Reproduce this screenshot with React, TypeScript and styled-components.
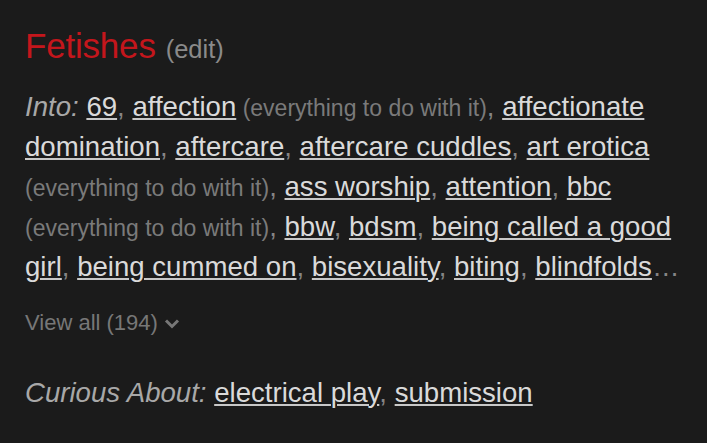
import React from 'react';
import styled, { createGlobalStyle } from 'styled-components';

const GlobalStyle = createGlobalStyle`
  html, body {
    margin: 0;
    padding: 0;
    background: #1b1b1b;
  }
  body {
    font-family: "Liberation Sans", Arial, sans-serif;
  }
`;

type Item = { name: string; note?: string };

const into: Item[] = [
  { name: '69' },
  { name: 'affection', note: '(everything to do with it)' },
  { name: 'affectionate domination' },
  { name: 'aftercare' },
  { name: 'aftercare cuddles' },
  { name: 'art erotica', note: '(everything to do with it)' },
  { name: 'ass worship' },
  { name: 'attention' },
  { name: 'bbc', note: '(everything to do with it)' },
  { name: 'bbw' },
  { name: 'bdsm' },
  { name: 'being called a good girl' },
  { name: 'being cummed on' },
  { name: 'bisexuality' },
  { name: 'biting' },
  { name: 'blindfolds' },
];

const curious: Item[] = [{ name: 'electrical play' }, { name: 'submission' }];

function ItemList({ items, more }: { items: Item[]; more?: boolean }) {
  return (
    <>
      {items.map((item, i) => (
        <React.Fragment key={item.name}>
          <Link href="#">{item.name}</Link>
          {item.note && <Note> {item.note}</Note>}
          {i < items.length - 1 ? <Sep>, </Sep> : more ? <Sep>…</Sep> : null}
        </React.Fragment>
      ))}
    </>
  );
}

export default function App() {
  return (
    <>
      <GlobalStyle />
      <Panel>
        <Header>
          <Title>Fetishes</Title>
          <Edit href="#">(edit)</Edit>
        </Header>

        <List>
          <Label>Into:</Label> <ItemList items={into} more />
        </List>

        <ViewAll href="#">
          View all (194)
          <svg width="16" height="11" viewBox="0 0 16 11">
            <path d="M2 2.5 L8 8.5 L14 2.5" fill="none" stroke="currentColor" strokeWidth="3" />
          </svg>
        </ViewAll>

        <List>
          <Label>Curious About:</Label> <ItemList items={curious} />
        </List>
      </Panel>
    </>
  );
}

const Panel = styled.div`
  width: 707px;
  height: 443px;
  box-sizing: border-box;
  padding: 26px 14px 0 25px;
  background: #1b1b1b;
`;

const Header = styled.div`
  display: flex;
  align-items: baseline;
  gap: 10px;
  margin-bottom: 18px;
  line-height: 40px;
`;

const Title = styled.h2`
  margin: 0;
  font-size: 35px;
  font-weight: normal;
  color: #c4161c;
  letter-spacing: -0.2px;
`;

const Edit = styled.a`
  font-size: 25.5px;
  color: #8a8a8a;
  text-decoration: none;
`;

const List = styled.p`
  margin: 0;
  font-size: 27.6px;
  line-height: 40px;
  color: #858585;
`;

const Label = styled.em`
  color: #a8a8a8;
`;

const Link = styled.a`
  color: #dadada;
  text-decoration: underline;
  text-underline-offset: 2px;
  text-decoration-thickness: 1.5px;
  text-decoration-color: #c8c8c8;
`;

const Note = styled.span`
  font-size: 23px;
  line-height: 1;
  color: #7a7a7a;
`;

const Sep = styled.span`
  color: #858585;
`;

const ViewAll = styled.a`
  display: flex;
  width: fit-content;
  align-items: center;
  gap: 6px;
  margin: 24px 0 38px;
  font-size: 22px;
  color: #777777;
  text-decoration: none;
  line-height: 24px;
`;
